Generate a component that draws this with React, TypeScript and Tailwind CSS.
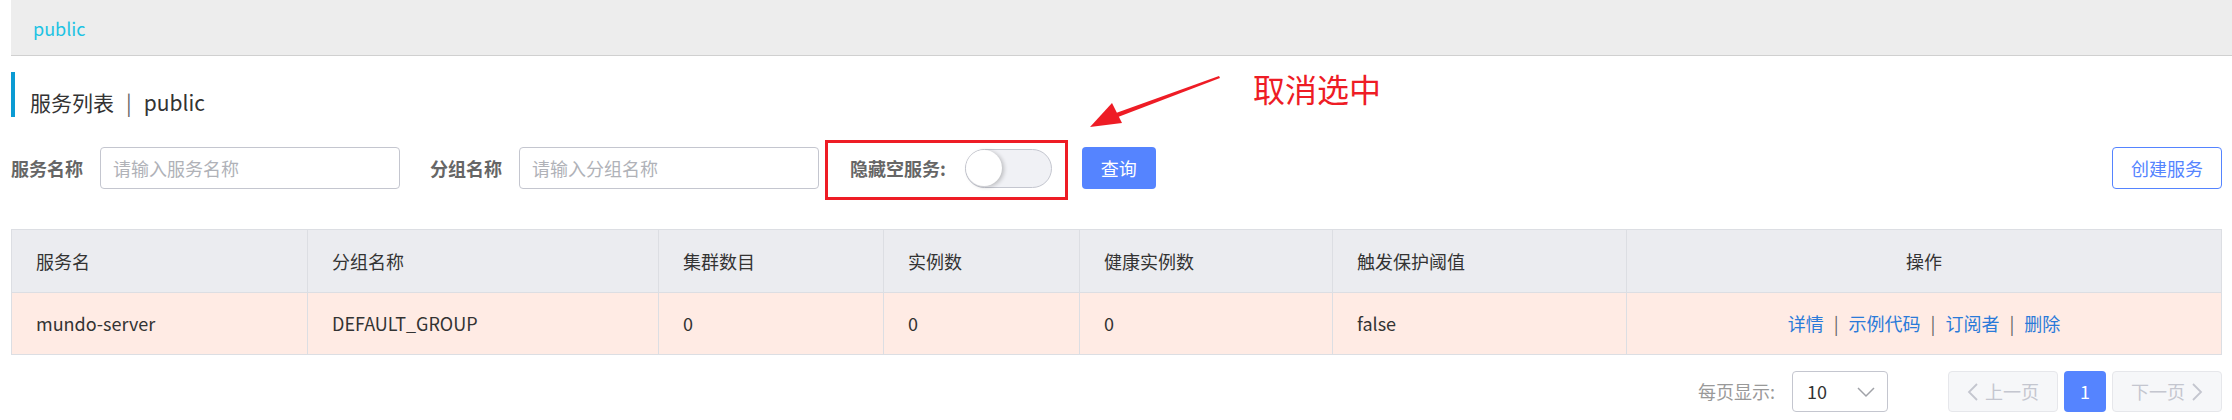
import React from 'react';

const cols = [
  { title: '服务名', w: 'w-[296px]' },
  { title: '分组名称', w: 'w-[351px]' },
  { title: '集群数目', w: 'w-[225px]' },
  { title: '实例数', w: 'w-[196px]' },
  { title: '健康实例数', w: 'w-[253px]' },
  { title: '触发保护阈值', w: 'w-[294px]' },
];

const row = ['mundo-server', 'DEFAULT_GROUP', '0', '0', '0', 'false'];

const App: React.FC = () => {
  return (
    <div className="relative w-[2232px] h-[420px] bg-white text-[#333] font-['Noto_Sans_CJK_SC','Noto_Sans',sans-serif] overflow-hidden">
      {/* breadcrumb bar */}
      <div className="ml-[11px] h-[56px] bg-[#ededed] border-b border-[#d0d0d0] flex items-center pl-[22px] pt-[2px]">
        <span className="text-[18px] text-[#1dc3e3]">public</span>
      </div>

      <div className="pl-[11px] pr-[10px]">
        {/* title */}
        <div className="mt-[16px] h-[45px] border-l-4 border-[#0b9bd3] pl-[15px] pt-[19px] text-[21px] leading-[22px] text-[#333]">
          服务列表<span className="mx-[12px] text-[#666]">|</span>public
        </div>

        {/* search form */}
        <div className="mt-[30px] h-[42px] flex items-center">
          <span className="text-[18px] font-bold text-[#666]">服务名称</span>
          <input
            className="ml-[17px] w-[300px] h-[42px] border border-[#c4c6cf] rounded-[4px] px-[12px] text-[18px] outline-none placeholder:text-[#b0b2b8]"
            placeholder="请输入服务名称"
          />
          <span className="ml-[30px] text-[18px] font-bold text-[#666]">分组名称</span>
          <input
            className="ml-[17px] w-[300px] h-[42px] border border-[#c4c6cf] rounded-[4px] px-[12px] text-[18px] outline-none placeholder:text-[#b0b2b8]"
            placeholder="请输入分组名称"
          />
          <div className="relative ml-[31px] flex items-center">
            <span className="text-[18px] font-bold text-[#666]">隐藏空服务:</span>
            <div className="ml-[19px] w-[87px] h-[39px] rounded-full bg-[#f0f1f5] border border-[#c4c6cf] flex items-center">
              <div className="w-[36px] h-[36px] rounded-full bg-white shadow-[2px_1px_4px_rgba(0,0,0,0.22)]" />
            </div>
            {/* annotation box */}
            <div className="absolute -left-[25px] -right-[16px] -top-[9px] -bottom-[12px] border-[3px] border-[#ee1c25]" />
          </div>
          <button className="ml-[30px] w-[74px] h-[42px] rounded-[4px] bg-[#5584ff] text-white text-[18px]">查询</button>
          <button className="ml-auto w-[110px] h-[42px] rounded-[4px] border border-[#5584ff] text-[#5584ff] text-[18px] bg-white">创建服务</button>
        </div>

        {/* table */}
        <table className="mt-[40px] w-[2211px] table-fixed border-collapse border border-[#dcdee3] text-[18px]">
          <thead>
            <tr className="h-[63px] bg-[#ebecf0]">
              {cols.map(c => (
                <th key={c.title} className={`${c.w} border border-[#dcdee3] pl-[24px] text-left font-normal text-[#333]`}>
                  {c.title}
                </th>
              ))}
              <th className="border border-[#dcdee3] text-center font-normal text-[#333]">操作</th>
            </tr>
          </thead>
          <tbody>
            <tr className="h-[62px] bg-[#ffebe4]">
              {row.map((v, i) => (
                <td key={i} className="border border-[#dcdee3] pl-[24px] text-[#333]">{v}</td>
              ))}
              <td className="border border-[#dcdee3] text-center text-[#2a7ad9]">
                详情<span className="mx-[10px] text-[#666]">|</span>示例代码<span className="mx-[10px] text-[#666]">|</span>订阅者<span className="mx-[10px] text-[#666]">|</span>删除
              </td>
            </tr>
          </tbody>
        </table>

        {/* pagination */}
        <div className="mt-[16px] h-[41px] flex items-center justify-end text-[18px]">
          <span className="text-[#999]">每页显示:</span>
          <div className="ml-[17px] w-[96px] h-[41px] border border-[#c4c6cf] rounded-[4px] flex items-center justify-between pl-[14px] pr-[12px] text-[#333]">
            <span>10</span>
            <svg width="18" height="12" viewBox="0 0 18 12" fill="none" stroke="#a0a2a8" strokeWidth="1.5">
              <path d="M1 2l8 8 8-8" />
            </svg>
          </div>
          <div className="ml-[60px] w-[110px] h-[41px] rounded-[4px] border border-[#e6e7eb] bg-[#f6f7f9] flex items-center justify-center text-[#c4c6cf]">
            <svg width="12" height="20" viewBox="0 0 12 20" fill="none" stroke="#c4c6cf" strokeWidth="1.8" className="mr-[6px]">
              <path d="M10 2l-8 8 8 8" />
            </svg>
            上一页
          </div>
          <div className="ml-[6px] w-[42px] h-[41px] rounded-[4px] bg-[#5584ff] text-white flex items-center justify-center">1</div>
          <div className="ml-[6px] w-[110px] h-[41px] rounded-[4px] border border-[#e6e7eb] bg-[#f6f7f9] flex items-center justify-center text-[#c4c6cf]">
            下一页
            <svg width="12" height="20" viewBox="0 0 12 20" fill="none" stroke="#c4c6cf" strokeWidth="1.8" className="ml-[6px]">
              <path d="M2 2l8 8-8 8" />
            </svg>
          </div>
        </div>
      </div>

      {/* annotation arrow + note */}
      <svg className="absolute left-[1080px] top-[70px]" width="150" height="66" viewBox="0 0 150 66">
        <polygon points="139,6 140,8 38,47 36,43" fill="#ee1c25" />
        <polygon points="10,57 32,33 42,53" fill="#ee1c25" />
      </svg>
      <div className="absolute left-[1253px] top-[70px] text-[32px] leading-[36px] text-[#ee1c25]">取消选中</div>
    </div>
  );
};

export default App;
